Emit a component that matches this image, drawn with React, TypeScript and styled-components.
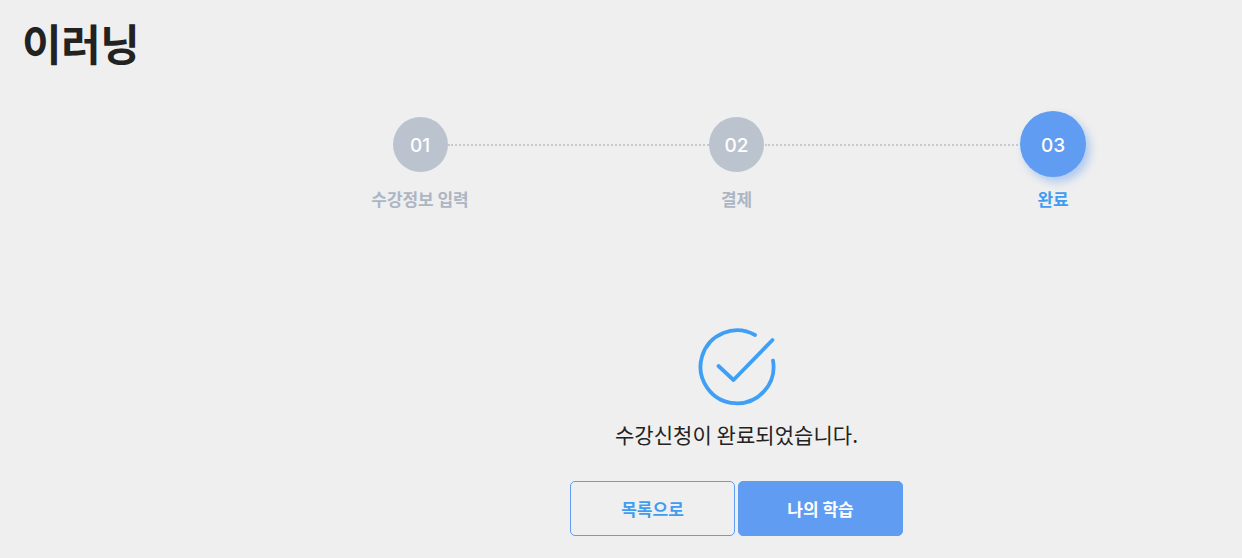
import React from "react";
import styled, { createGlobalStyle } from "styled-components";

const Global = createGlobalStyle`
  html, body { margin: 0; padding: 0; background: #efefef; }
  body { font-family: "Noto Sans CJK KR", "Noto Sans", sans-serif; }
`;

const Page = styled.div`
  width: 1242px;
  height: 558px;
  overflow: hidden;
  background: #efefef;
  display: flex;
  flex-direction: column;
`;

const Title = styled.h1`
  margin: 0;
  padding: 12px 0 0 22px;
  height: 98px;
  box-sizing: border-box;
  font-size: 43px;
  line-height: 60px;
  font-weight: 700;
  color: #222;
  letter-spacing: -0.4px;
`;

const Content = styled.div`
  width: 733px;
  margin-left: 370px;
  display: flex;
  flex-direction: column;
`;

const Stepper = styled.div`
  display: flex;
  align-items: flex-start;
  margin-top: 13px;
`;

const Step = styled.div`
  width: 100px;
  flex: none;
  display: flex;
  flex-direction: column;
  align-items: center;
`;

const CircleSlot = styled.div`
  height: 66px;
  display: flex;
  align-items: center;
  justify-content: center;
`;

const Circle = styled.div<{ $active?: boolean }>`
  width: ${(p) => (p.$active ? 66 : 55)}px;
  height: ${(p) => (p.$active ? 66 : 55)}px;
  padding-top: 2px;
  box-sizing: border-box;
  border-radius: 50%;
  background: ${(p) => (p.$active ? "#5f9cf2" : "#bbc3cf")};
  box-shadow: ${(p) => (p.$active ? "4px 5px 9px rgba(95,156,242,0.45)" : "none")};
  color: #fff;
  font-family: Inter, "Noto Sans", sans-serif;
  font-size: 19px;
  font-weight: 500;
  display: flex;
  align-items: center;
  justify-content: center;
  position: relative;
`;

const StepLabel = styled.div<{ $active?: boolean }>`
  margin-top: 9px;
  font-size: 17px;
  line-height: 25px;
  font-weight: 700;
  letter-spacing: -0.05px;
  white-space: nowrap;
  color: ${(p) => (p.$active ? "#3f9cf0" : "#acb5c3")};
`;

const Connector = styled.div`
  flex: 1;
  height: 0;
  margin: 33px -22px 0;
  border-top: 2px dotted #c9c9c9;
`;

const Result = styled.div`
  margin-top: 112px;
  display: flex;
  flex-direction: column;
  align-items: center;
`;

const CheckIcon = styled.svg`
  width: 80px;
  height: 84px;
  display: block;
`;

const Message = styled.p`
  margin: 12px 0 0;
  font-size: 21px;
  line-height: 30px;
  font-weight: 400;
  letter-spacing: 0.05px;
  color: #222;
`;

const Buttons = styled.div`
  display: flex;
  gap: 3px;
  margin-top: 32px;
`;

const Button = styled.button<{ $primary?: boolean }>`
  width: 165px;
  height: 55px;
  box-sizing: border-box;
  border-radius: 5px;
  border: 1px solid #5f9cf2;
  background: ${(p) => (p.$primary ? "#5f9cf2" : "transparent")};
  color: ${(p) => (p.$primary ? "#fff" : "#3f9cf0")};
  font-family: inherit;
  font-size: 17px;
  font-weight: 700;
  letter-spacing: 0;
  padding: 0;
`;

export default function App() {
  return (
    <Page>
      <Global />
      <Title>이러닝</Title>
      <Content>
        <Stepper>
          <Step>
            <CircleSlot><Circle>01</Circle></CircleSlot>
            <StepLabel>수강정보 입력</StepLabel>
          </Step>
          <Connector />
          <Step>
            <CircleSlot><Circle>02</Circle></CircleSlot>
            <StepLabel>결제</StepLabel>
          </Step>
          <Connector />
          <Step>
            <CircleSlot><Circle $active>03</Circle></CircleSlot>
            <StepLabel $active>완료</StepLabel>
          </Step>
        </Stepper>
        <Result>
          <CheckIcon viewBox="0 0 80 84" fill="none" stroke="#3f9ff5" strokeWidth="3.8" strokeLinecap="round" strokeLinejoin="round">
            <path d="M58 12 A36.5 36.5 0 1 0 76 37.5" />
            <path d="M21.5 43 L36.5 57 L75.5 17" />
          </CheckIcon>
          <Message>수강신청이 완료되었습니다.</Message>
          <Buttons>
            <Button>목록으로</Button>
            <Button $primary>나의 학습</Button>
          </Buttons>
        </Result>
      </Content>
    </Page>
  );
}
